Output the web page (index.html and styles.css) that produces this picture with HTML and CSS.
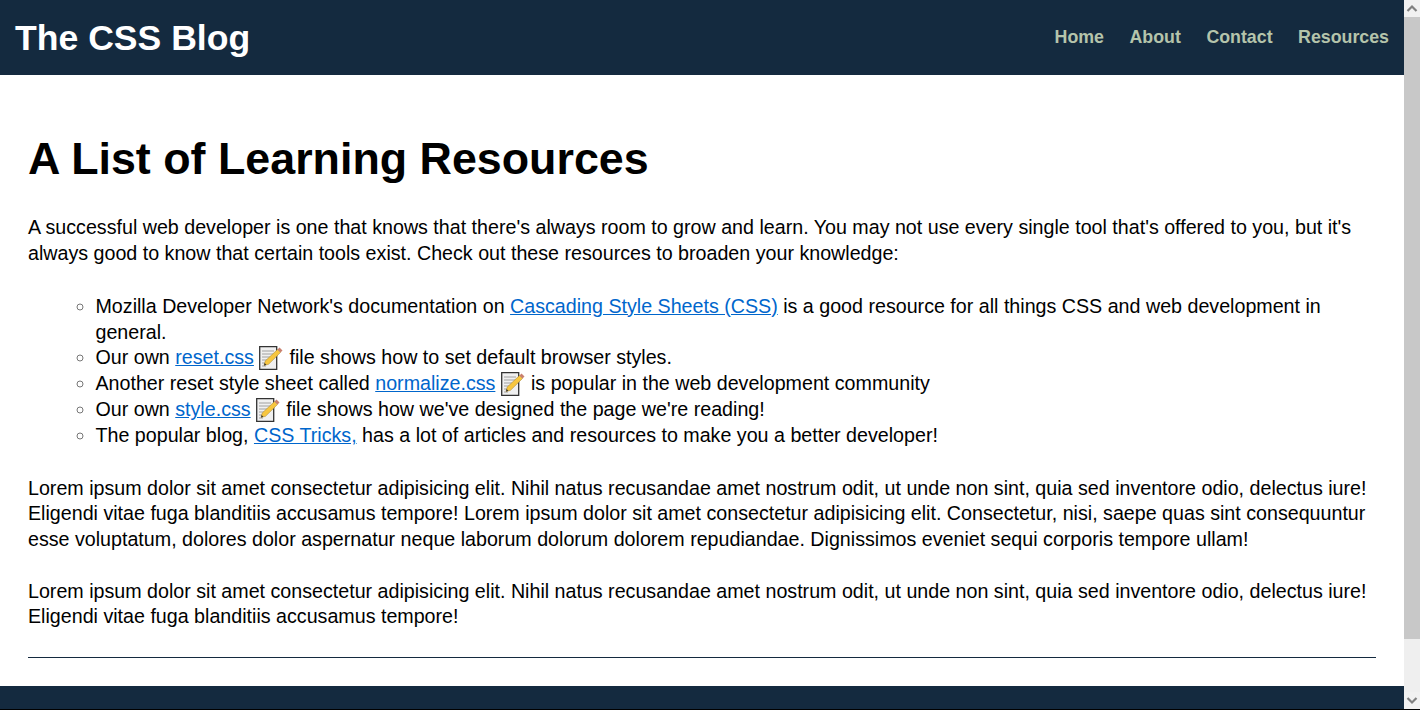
FILE: index.html
```html
<!DOCTYPE html>
<html lang="en">
<head>
<meta charset="UTF-8">
<meta name="viewport" content="width=device-width, initial-scale=1.0">
<title>The CSS Blog</title>
<link rel="stylesheet" href="styles.css">
</head>
<body>
<div class="window">
  <div class="page">
    <header class="site-header">
      <div class="site-title">The CSS Blog</div>
      <nav class="site-nav">
        <a href="#">Home</a>
        <a href="#">About</a>
        <a href="#">Contact</a>
        <a href="#">Resources</a>
      </nav>
    </header>
    <main class="content">
      <h1>A List of Learning Resources</h1>
      <p>A successful web developer is one that knows that there's always room to grow and learn. You may not use every single tool that's offered to you, but it's always good to know that certain tools exist. Check out these resources to broaden your knowledge:</p>
      <ul class="resources">
        <li>Mozilla Developer Network's documentation on <a href="#">Cascading Style Sheets (CSS)</a> is a good resource for all things CSS and web development in general.</li>
        <li>Our own <a href="#">reset.css</a> <svg class="memo" viewBox="0 0 24 24"><use href="#memo"></use></svg> file shows how to set default browser styles.</li>
        <li>Another reset style sheet called <a href="#">normalize.css</a> <svg class="memo" viewBox="0 0 24 24"><use href="#memo"></use></svg> is popular in the web development community</li>
        <li>Our own <a href="#">style.css</a> <svg class="memo" viewBox="0 0 24 24"><use href="#memo"></use></svg> file shows how we've designed the page we're reading!</li>
        <li>The popular blog, <a href="#">CSS Tricks,</a> has a lot of articles and resources to make you a better developer!</li>
      </ul>
      <p>Lorem ipsum dolor sit amet consectetur adipisicing elit. Nihil natus recusandae amet nostrum odit, ut unde non sint, quia sed inventore odio, delectus iure! Eligendi vitae fuga blanditiis accusamus tempore! Lorem ipsum dolor sit amet consectetur adipisicing elit. Consectetur, nisi, saepe quas sint consequuntur esse voluptatum, dolores dolor aspernatur neque laborum dolorum dolorem repudiandae. Dignissimos eveniet sequi corporis tempore ullam!</p>
      <p>Lorem ipsum dolor sit amet consectetur adipisicing elit. Nihil natus recusandae amet nostrum odit, ut unde non sint, quia sed inventore odio, delectus iure! Eligendi vitae fuga blanditiis accusamus tempore!</p>
      <hr class="rule">
    </main>
    <footer class="site-footer"></footer>
  </div>
  <div class="scrollbar">
    <div class="scroll-btn"><svg viewBox="0 0 16 17"><path d="M3.500 11 8 6.500 12.500 11" /></svg></div>
    <div class="scroll-track"><div class="scroll-thumb"></div></div>
    <div class="scroll-btn"><svg viewBox="0 0 16 17"><path d="M3.500 6 8 10.500 12.500 6" /></svg></div>
  </div>
</div>
<svg class="defs" width="0" height="0">
  <defs>
    <g id="memo">
      <path d="M.7.7h17v22.600H.7z" fill="#f0f0f0" stroke="#333" stroke-width="1.300"/>
      <path d="M3 5h12M3 8h12M3 11h10M3 14h7M3 17h5M3 20h4" stroke="#a0a0a0" stroke-width="1.100"/>
      <path d="M5 19.500l1.200-4.500L18.500 3.500l3 3L9.500 18.300z" fill="#f7c63f" stroke="#a08030" stroke-width=".5"/>
      <path d="M18.500 3.500L20.500 1.500l3 3-2 2z" fill="#c9806f"/>
      <path d="M5 19.500l.6-2.400 1.800 1.700z" fill="#333"/>
    </g>
  </defs>
</svg>
</body>
</html>
```

FILE: styles.css
```css
html, body {
    margin: 0;
    padding: 0;
    background-color: #fff;
    overflow: hidden;
}

body {
    height: 718px;
    font-family: "Liberation Sans", Arial, sans-serif;
    font-size: 19.67px;
    color: #000;
}

.window {
    display: flex;
    width: 1420px;
    height: 710px;
    border-bottom: 1px solid #000;
    box-sizing: border-box;
    overflow: hidden;
}

.page {
    flex: 1;
    min-width: 0;
    display: flex;
    flex-direction: column;
}

.site-header {
    display: flex;
    justify-content: space-between;
    align-items: center;
    height: 75px;
    flex-shrink: 0;
    padding: 0 15px;
    background-color: #142a3f;
}

.site-title {
    padding-top: 2px;
    font-size: 35.6px;
    font-weight: bold;
    color: #fff;
}

.site-nav {
    display: flex;
    gap: 25.5px;
}

.site-nav a {
    font-size: 17.8px;
    font-weight: bold;
    color: #b5c4ab;
    text-decoration: none;
}

.content {
    flex: 1;
    padding: 0 28px;
}

h1 {
    margin: 58px 0 32px;
    font-size: 44.8px;
    line-height: 50px;
}

p {
    margin: 0 0 26.400px;
    line-height: 25.6px;
}

a {
    color: #0066cc;
}

.resources {
    margin: 27.400px 0 26.400px;
    padding-left: 67.5px;
    list-style-type: circle;
    line-height: 25.96px;
}

.resources li::marker {
    color: #777;
}

.memo {
    width: 24px;
    height: 24px;
    margin-right: 0.7px;
    vertical-align: -6px;
}

.rule {
    margin: 26.6px 0 0;
    border: 0;
    border-top: 1px solid #142a3f;
}

.site-footer {
    height: 23px;
    flex-shrink: 0;
    background-color: #142a3f;
}

.scrollbar {
    display: flex;
    flex-direction: column;
    width: 16px;
    flex-shrink: 0;
    background-color: #efefef;
}

.scroll-btn {
    height: 17px;
    flex-shrink: 0;
    background-color: #f1f1f1;
}

.scroll-btn svg {
    display: block;
    width: 16px;
    height: 17px;
    fill: none;
    stroke: #808080;
    stroke-width: 2.200;
}

.scroll-track {
    flex: 1;
}

.scroll-thumb {
    height: 622px;
    background-color: #c8c8c8;
}

.defs {
    position: absolute;
}
```
